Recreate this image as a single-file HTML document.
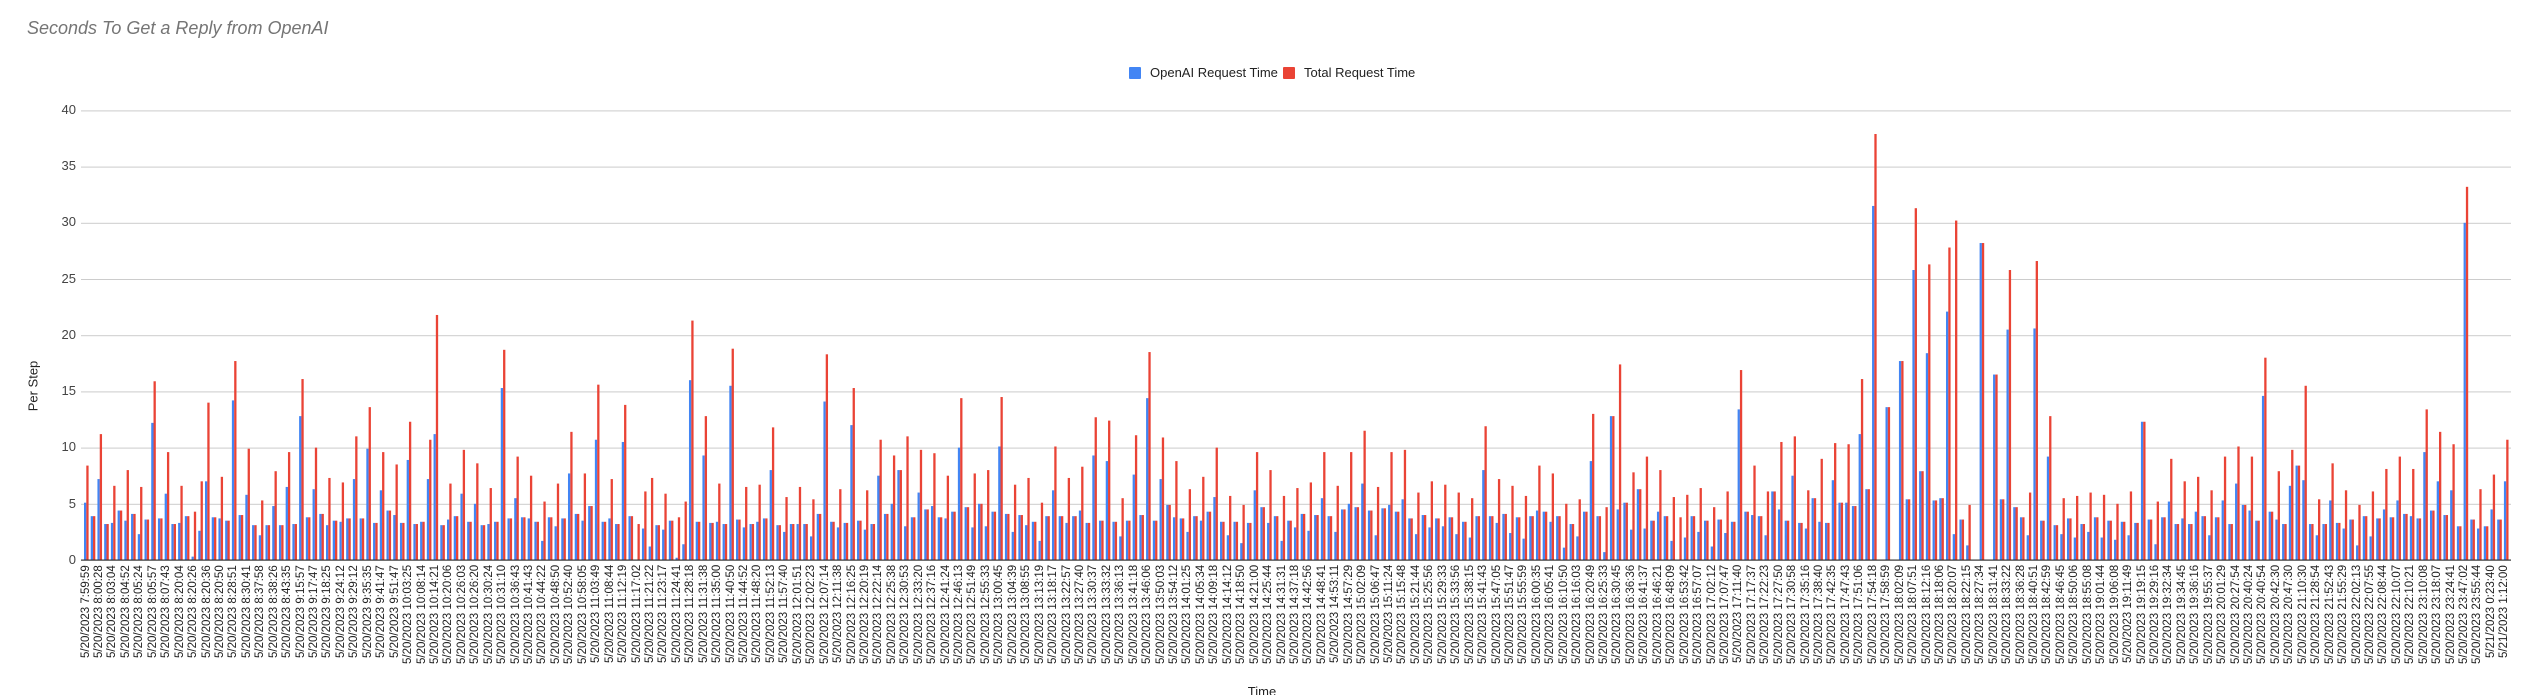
<!DOCTYPE html>
<html><head><meta charset="utf-8">
<style>
html,body{margin:0;padding:0;background:#fff;width:2528px;height:695px;overflow:hidden;font-family:"Liberation Sans",Arial,sans-serif;}
#wrap{position:relative;width:2528px;height:695px;}
.title{position:absolute;left:27px;top:18px;font-size:18px;font-style:italic;color:#757575;white-space:nowrap;}
.leg{position:absolute;top:65px;font-size:13px;color:#222;white-space:nowrap;line-height:15px;}
.sq{position:absolute;top:67px;width:12px;height:12px;border-radius:1px;}
.yl{position:absolute;right:2452px;font-size:13px;color:#444;line-height:14px;text-align:right;}
.ptitle{position:absolute;left:33px;top:386px;transform:translate(-50%,-50%) rotate(-90deg);font-size:13px;color:#222;white-space:nowrap;}
.xtitle{position:absolute;left:1262px;top:684px;transform:translateX(-50%);font-size:13px;color:#222;}
#xl{position:absolute;left:79.6px;top:565px;height:110px;display:flex;}
#xl div{width:13.444px;height:110px;writing-mode:vertical-rl;transform:rotate(180deg);text-align:end;font-size:11.5px;line-height:13.444px;color:#222;white-space:nowrap;overflow:visible;}
svg{position:absolute;left:0;top:0;}
</style></head><body><div id="wrap">
<div class="title">Seconds To Get a Reply from OpenAI</div>
<div class="sq" style="left:1129px;background:#4285f4"></div>
<div class="leg" style="left:1150px">OpenAI Request Time</div>
<div class="sq" style="left:1283px;background:#ea4335"></div>
<div class="leg" style="left:1304px">Total Request Time</div>
<div class="yl" style="top:103px">40</div>
<div class="yl" style="top:159px">35</div>
<div class="yl" style="top:215px">30</div>
<div class="yl" style="top:272px">25</div>
<div class="yl" style="top:328px">20</div>
<div class="yl" style="top:384px">15</div>
<div class="yl" style="top:440px">10</div>
<div class="yl" style="top:497px">5</div>
<div class="yl" style="top:553px">0</div>
<div class="ptitle">Per Step</div>
<div class="xtitle">Time</div>
<svg id="chart" width="2528" height="695"></svg>
<div id="xl">
<div>5/20/2023 7:59:59</div><div>5/20/2023 8:00:28</div><div>5/20/2023 8:03:04</div><div>5/20/2023 8:04:52</div><div>5/20/2023 8:05:24</div><div>5/20/2023 8:05:57</div><div>5/20/2023 8:07:43</div><div>5/20/2023 8:20:04</div><div>5/20/2023 8:20:26</div><div>5/20/2023 8:20:36</div><div>5/20/2023 8:20:50</div><div>5/20/2023 8:28:51</div><div>5/20/2023 8:30:41</div><div>5/20/2023 8:37:58</div><div>5/20/2023 8:38:26</div><div>5/20/2023 8:43:35</div>
<div>5/20/2023 9:15:57</div><div>5/20/2023 9:17:47</div><div>5/20/2023 9:18:25</div><div>5/20/2023 9:24:12</div><div>5/20/2023 9:29:12</div><div>5/20/2023 9:35:35</div><div>5/20/2023 9:41:47</div><div>5/20/2023 9:51:47</div>
<div>5/20/2023 10:03:25</div><div>5/20/2023 10:08:14</div><div>5/20/2023 10:14:21</div><div>5/20/2023 10:20:06</div><div>5/20/2023 10:26:03</div><div>5/20/2023 10:26:20</div><div>5/20/2023 10:30:24</div><div>5/20/2023 10:31:10</div><div>5/20/2023 10:36:43</div><div>5/20/2023 10:41:43</div><div>5/20/2023 10:44:22</div><div>5/20/2023 10:48:50</div><div>5/20/2023 10:52:40</div><div>5/20/2023 10:58:05</div>
<div>5/20/2023 11:03:49</div><div>5/20/2023 11:08:44</div><div>5/20/2023 11:12:19</div><div>5/20/2023 11:17:02</div><div>5/20/2023 11:21:22</div><div>5/20/2023 11:23:17</div><div>5/20/2023 11:24:41</div><div>5/20/2023 11:28:18</div><div>5/20/2023 11:31:38</div><div>5/20/2023 11:35:00</div><div>5/20/2023 11:40:50</div><div>5/20/2023 11:44:52</div><div>5/20/2023 11:48:20</div><div>5/20/2023 11:52:13</div><div>5/20/2023 11:57:40</div>
<div>5/20/2023 12:01:51</div><div>5/20/2023 12:02:23</div><div>5/20/2023 12:07:14</div><div>5/20/2023 12:11:38</div><div>5/20/2023 12:16:25</div><div>5/20/2023 12:20:19</div><div>5/20/2023 12:22:14</div><div>5/20/2023 12:25:38</div><div>5/20/2023 12:30:53</div><div>5/20/2023 12:33:20</div><div>5/20/2023 12:37:16</div><div>5/20/2023 12:41:24</div><div>5/20/2023 12:46:13</div><div>5/20/2023 12:51:49</div><div>5/20/2023 12:55:33</div>
<div>5/20/2023 13:00:45</div><div>5/20/2023 13:04:39</div><div>5/20/2023 13:08:55</div><div>5/20/2023 13:13:19</div><div>5/20/2023 13:18:17</div><div>5/20/2023 13:22:57</div><div>5/20/2023 13:27:40</div><div>5/20/2023 13:30:37</div><div>5/20/2023 13:33:32</div><div>5/20/2023 13:36:13</div><div>5/20/2023 13:41:18</div><div>5/20/2023 13:46:06</div><div>5/20/2023 13:50:03</div><div>5/20/2023 13:54:12</div>
<div>5/20/2023 14:01:25</div><div>5/20/2023 14:05:34</div><div>5/20/2023 14:09:18</div><div>5/20/2023 14:14:12</div><div>5/20/2023 14:18:50</div><div>5/20/2023 14:21:00</div><div>5/20/2023 14:25:44</div><div>5/20/2023 14:31:31</div><div>5/20/2023 14:37:18</div><div>5/20/2023 14:42:56</div><div>5/20/2023 14:48:41</div><div>5/20/2023 14:53:11</div><div>5/20/2023 14:57:29</div>
<div>5/20/2023 15:02:09</div><div>5/20/2023 15:06:47</div><div>5/20/2023 15:11:24</div><div>5/20/2023 15:15:48</div><div>5/20/2023 15:21:44</div><div>5/20/2023 15:25:56</div><div>5/20/2023 15:29:33</div><div>5/20/2023 15:33:56</div><div>5/20/2023 15:38:15</div><div>5/20/2023 15:41:43</div><div>5/20/2023 15:47:05</div><div>5/20/2023 15:51:47</div><div>5/20/2023 15:55:59</div>
<div>5/20/2023 16:00:35</div><div>5/20/2023 16:05:41</div><div>5/20/2023 16:10:50</div><div>5/20/2023 16:16:03</div><div>5/20/2023 16:20:49</div><div>5/20/2023 16:25:33</div><div>5/20/2023 16:30:45</div><div>5/20/2023 16:36:36</div><div>5/20/2023 16:41:37</div><div>5/20/2023 16:46:21</div><div>5/20/2023 16:48:09</div><div>5/20/2023 16:53:42</div><div>5/20/2023 16:57:07</div>
<div>5/20/2023 17:02:12</div><div>5/20/2023 17:07:47</div><div>5/20/2023 17:11:40</div><div>5/20/2023 17:17:37</div><div>5/20/2023 17:22:23</div><div>5/20/2023 17:27:50</div><div>5/20/2023 17:30:58</div><div>5/20/2023 17:35:16</div><div>5/20/2023 17:38:40</div><div>5/20/2023 17:42:35</div><div>5/20/2023 17:47:43</div><div>5/20/2023 17:51:06</div><div>5/20/2023 17:54:18</div><div>5/20/2023 17:58:59</div>
<div>5/20/2023 18:02:09</div><div>5/20/2023 18:07:51</div><div>5/20/2023 18:12:16</div><div>5/20/2023 18:18:06</div><div>5/20/2023 18:20:07</div><div>5/20/2023 18:22:15</div><div>5/20/2023 18:27:34</div><div>5/20/2023 18:31:41</div><div>5/20/2023 18:33:22</div><div>5/20/2023 18:36:28</div><div>5/20/2023 18:40:51</div><div>5/20/2023 18:42:59</div><div>5/20/2023 18:46:45</div><div>5/20/2023 18:50:06</div><div>5/20/2023 18:55:08</div>
<div>5/20/2023 19:01:44</div><div>5/20/2023 19:06:08</div><div>5/20/2023 19:11:49</div><div>5/20/2023 19:19:15</div>
<div>5/20/2023 19:29:16</div><div>5/20/2023 19:32:34</div><div>5/20/2023 19:34:45</div><div>5/20/2023 19:36:16</div><div>5/20/2023 19:55:37</div><div>5/20/2023 20:01:29</div><div>5/20/2023 20:27:54</div><div>5/20/2023 20:40:24</div><div>5/20/2023 20:40:54</div><div>5/20/2023 20:42:30</div><div>5/20/2023 20:47:30</div><div>5/20/2023 21:10:30</div><div>5/20/2023 21:28:54</div><div>5/20/2023 21:52:43</div><div>5/20/2023 21:55:29</div><div>5/20/2023 22:02:13</div><div>5/20/2023 22:07:55</div><div>5/20/2023 22:08:44</div><div>5/20/2023 22:10:07</div><div>5/20/2023 22:10:21</div><div>5/20/2023 23:10:08</div><div>5/20/2023 23:18:07</div><div>5/20/2023 23:24:41</div><div>5/20/2023 23:47:02</div><div>5/20/2023 23:55:44</div><div>5/21/2023 0:23:40</div><div>5/21/2023 1:12:00</div>
</div>
</div>
<script>
var D=[
[5.1,8.4],[3.9,3.9],[7.2,11.2],[3.2,3.2],[3.3,6.6],[4.4,4.4],[3.5,8],[4.1,4.1],[2.3,6.5],[3.6,3.6],
[12.2,15.9],[3.7,3.7],[5.9,9.6],[3.2,3.2],[3.3,6.6],[3.9,3.9],[0.3,4.3],[2.6,7],[7,14],[3.8,3.8],
[3.7,7.4],[3.5,3.5],[14.2,17.7],[4,4],[5.8,9.9],[3.1,3.1],[2.2,5.3],[3.1,3.1],[4.8,7.9],[3.1,3.1],
[6.5,9.6],[3.2,3.2],[12.8,16.1],[3.8,3.8],[6.3,10],[4.1,4.1],[3.1,7.3],[3.5,3.5],[3.4,6.9],[3.7,3.7],
[7.2,11],[3.7,3.7],[9.9,13.6],[3.3,3.3],[6.2,9.6],[4.4,4.4],[4,8.5],[3.3,3.3],[8.9,12.3],[3.2,3.2],
[3.4,3.4],
[7.2,10.7],[11.2,21.8],[3.1,3.1],[3.6,6.8],[3.9,3.9],[5.9,9.8],[3.4,3.4],[5,8.6],[3.1,3.1],[3.2,6.4],
[3.4,3.4],[15.3,18.7],[3.7,3.7],[5.5,9.2],[3.8,3.8],[3.7,7.5],[3.4,3.4],[1.7,5.2],[3.8,3.8],[3,6.8],
[3.7,3.7],[7.7,11.4],[4.1,4.1],[3.5,7.7],[4.8,4.8],[10.7,15.6],[3.4,3.4],[3.7,7.2],[3.2,3.2],[10.5,13.8],
[3.9,3.9],[0,3.2],[2.8,6.1],[1.2,7.3],[3.1,3.1],[2.7,5.9],[3.5,3.5],[0.2,3.8],[1.4,5.2],[16,21.3],
[3.4,3.4],[9.3,12.8],[3.3,3.3],[3.4,6.8],[3.2,3.2],[15.5,18.8],[3.6,3.6],[2.9,6.5],[3.2,3.2],[3.4,6.7],
[3.7,3.7],[8,11.8],[3.1,3.1],[2.5,5.6],[3.2,3.2],[3.2,6.5],[3.2,3.2],[2.1,5.4],[4.1,4.1],[14.1,18.3],
[3.4,3.4],[2.9,6.3],[3.3,3.3],[12,15.3],[3.5,3.5],[2.7,6.2],[3.2,3.2],[7.5,10.7],[4.1,4.1],[5,9.3],
[8,8],[3,11],[3.8,3.8],[6,9.8],[4.5,4.5],[4.8,9.5],[3.8,3.8],[3.7,7.5],[4.3,4.3],[10,14.4],
[4.7,4.7],[2.9,7.7],[5,5],[3,8],[4.3,4.3],[10.1,14.5],[4.1,4.1],[2.5,6.7],[4,4],[3.1,7.3],
[3.4,3.4],[1.7,5.1],[3.9,3.9],[6.2,10.1],[3.9,3.9],[3.3,7.3],[3.9,3.9],[4.4,8.3],[3.3,3.3],[9.3,12.7],
[3.5,3.5],
[8.8,12.4],[3.4,3.4],[2.1,5.5],[3.5,3.5],[7.6,11.1],[4,4],[14.4,18.5],[3.5,3.5],[7.2,10.9],[4.9,4.9],
[3.8,8.8],[3.7,3.7],[2.5,6.3],[3.9,3.9],[3.5,7.4],[4.3,4.3],[5.6,10],[3.4,3.4],[2.2,5.7],[3.4,3.4],
[1.5,4.9],[3.3,3.3],[6.2,9.6],[4.7,4.7],[3.3,8],[3.9,3.9],[1.7,5.7],[3.5,3.5],[2.9,6.4],[4.1,4.1],
[2.6,6.9],[4,4],[5.5,9.6],[3.9,3.9],[2.5,6.6],[4.5,4.5],[5,9.6],[4.7,4.7],[6.8,11.5],[4.4,4.4],
[2.2,6.5],[4.6,4.6],[4.9,9.6],[4.3,4.3],[5.4,9.8],[3.7,3.7],[2.3,6],[4,4],[2.9,7],[3.7,3.7],
[3,6.7],[3.8,3.8],[2.3,6],[3.4,3.4],[2,5.5],[3.9,3.9],[8,11.9],[3.9,3.9],[3.3,7.2],[4.1,4.1],
[2.4,6.6],[3.8,3.8],[1.9,5.7],[3.9,3.9],[4.4,8.4],[4.3,4.3],[3.4,7.7],[3.9,3.9],[1.1,5],[3.2,3.2],
[2.1,5.4],[4.3,4.3],[8.8,13],[3.9,3.9],[0.7,4.7],[12.8,12.8],[4.5,17.4],[5.1,5.1],[2.7,7.8],[6.3,6.3],
[2.8,9.2],[3.5,3.5],[4.3,8],[3.9,3.9],[1.7,5.6],[0,3.8],[2,5.8],[3.9,3.9],[2.5,6.4],[3.5,3.5],
[1.2,4.7],[3.6,3.6],[2.4,6.1],[3.4,3.4],[13.4,16.9],[4.3,4.3],[4,8.4],[3.9,3.9],[2.2,6.1],[6.1,6.1],
[4.5,10.5],
[3.5,3.5],[7.5,11],[3.3,3.3],[2.8,6.2],[5.5,5.5],[3.4,9],[3.3,3.3],[7.1,10.4],[5.1,5.1],[5.1,10.3],
[4.8,4.8],[11.2,16.1],[6.3,6.3],[31.5,37.9],[0,0],[13.6,13.6],[0,0],[17.7,17.7],[5.4,5.4],[25.8,31.3],
[7.9,7.9],[18.4,26.3],[5.3,5.3],[5.5,5.5],[22.1,27.8],[2.3,30.2],[3.6,3.6],[1.3,4.9],[0,0],[28.2,28.2],
[0,0],[16.5,16.5],[5.4,5.4],[20.5,25.8],[4.7,4.7],[3.8,3.8],[2.2,6],[20.6,26.6],[3.5,3.5],[9.2,12.8],
[3.1,3.1],[2.3,5.5],[3.7,3.7],[2,5.7],
[3.2,3.2],[2.5,6],[3.8,3.8],[2,5.8],[3.5,3.5],[1.8,5],[3.4,3.4],[2.2,6.1],[3.3,3.3],[12.3,12.3],
[3.6,3.6],
[1.4,5.2],[3.8,3.8],[5.2,9],[3.2,3.2],[3.7,7],[3.2,3.2],[4.3,7.4],[3.9,3.9],[2.2,6.2],[3.8,3.8],
[5.3,9.2],[3.2,3.2],[6.8,10.1],[4.9,4.9],[4.4,9.2],[3.5,3.5],[14.6,18],[4.3,4.3],[3.6,7.9],[3.2,3.2],
[6.6,9.8],[8.4,8.4],[7.1,15.5],[3.2,3.2],[2.2,5.4],[3.2,3.2],[5.3,8.6],[3.3,3.3],[2.8,6.2],[3.6,3.6],
[1.3,4.9],[3.9,3.9],[2.1,6.1],[3.7,3.7],[4.5,8.1],[3.8,3.8],[5.3,9.2],[4.1,4.1],[3.9,8.1],[3.7,3.7],
[9.6,13.4],[4.4,4.4],[7,11.4],[4,4],[6.2,10.3],[3,3],[30,33.2],[3.6,3.6],[2.8,6.3],[3,3],
[4.5,7.6],[3.6,3.6],[7,10.7]
];
var s='',k,y0=560,u=11.24;
for(k=1;k<=8;k++){var gy=(y0-k*56.2).toFixed(1);s+='<rect x="81" y="'+gy+'" width="2430" height="1" fill="#cccccc"/>';}
for(var i=0;i<D.length;i++){
 var x=84+i*6.722,b=D[i][0],r=D[i][1];
 if(b>0)s+='<rect x="'+x.toFixed(2)+'" y="'+(y0-b*u).toFixed(2)+'" width="2.3" height="'+(b*u).toFixed(2)+'" fill="#4285f4"/>';
 if(r>0)s+='<rect x="'+(x+2.3).toFixed(2)+'" y="'+(y0-r*u).toFixed(2)+'" width="2.3" height="'+(r*u).toFixed(2)+'" fill="#ea4335"/>';
}
s+='<rect x="81" y="559.5" width="2430" height="1.2" fill="#333333"/>';
document.getElementById('chart').innerHTML=s;
</script>
</body></html>
